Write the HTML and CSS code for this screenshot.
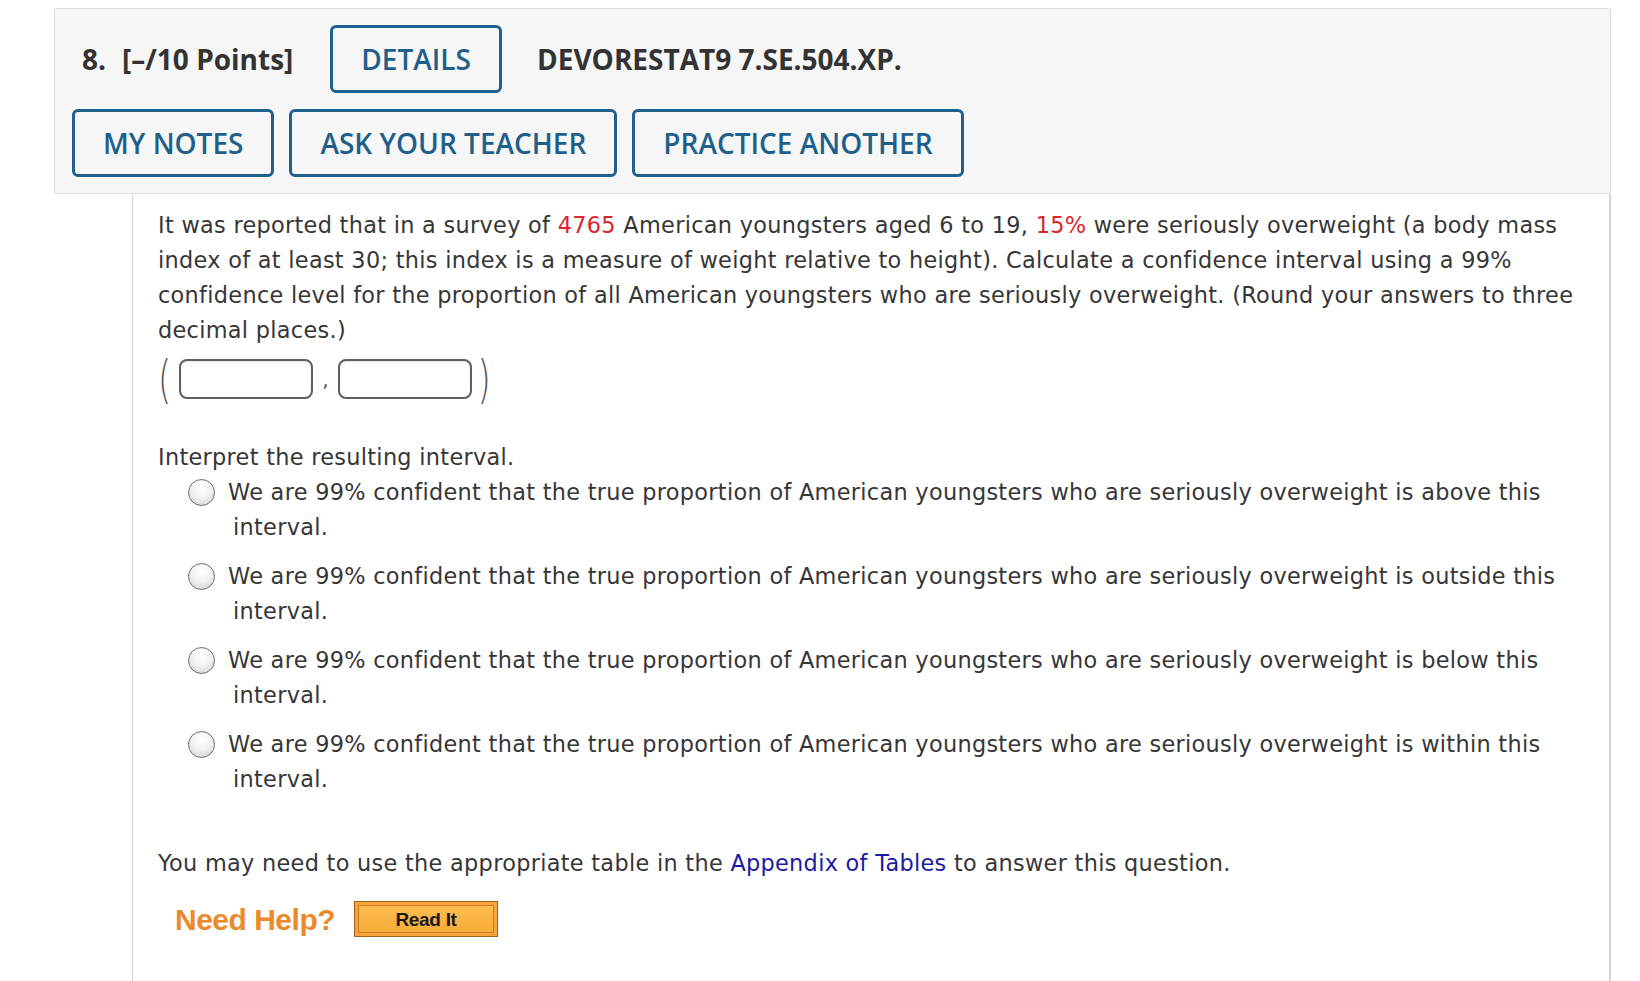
FILE: index.html
```html
<!DOCTYPE html>
<html>
<head>
<meta charset="utf-8">
<link rel="stylesheet" href="styles.css">
</head>
<body>
<div class="question">
  <div class="qhead">
    <div class="row row-top">
      <span class="qnum">8.</span>
      <span class="points">[–/10 Points]</span>
      <span class="btn btn-details">DETAILS</span>
      <span class="qid">DEVORESTAT9 7.SE.504.XP.</span>
    </div>
    <div class="row row-btns">
      <span class="btn">MY NOTES</span>
      <span class="btn">ASK YOUR TEACHER</span>
      <span class="btn">PRACTICE ANOTHER</span>
    </div>
  </div>
  <div class="qbody">
    <p class="stem">It was reported that in a survey of <span class="red">4765</span> American youngsters aged 6 to 19, <span class="red">15%</span> were seriously overweight (a body mass index of at least 30; this index is a measure of weight relative to height). Calculate a confidence interval using a 99% confidence level for the proportion of all American youngsters who are seriously overweight. (Round your answers to three decimal places.)</p>
    <div class="interval">
      <span class="paren">(</span>
      <span class="inbox"></span>
      <span class="comma">,</span>
      <span class="inbox"></span>
      <span class="paren">)</span>
    </div>
    <p class="prompt">Interpret the resulting interval.</p>
    <ul class="options">
      <li class="opt"><span class="radio"></span><span class="opt-text">We are 99% confident that the true proportion of American youngsters who are seriously overweight is above this interval.</span></li>
      <li class="opt"><span class="radio"></span><span class="opt-text">We are 99% confident that the true proportion of American youngsters who are seriously overweight is outside this interval.</span></li>
      <li class="opt"><span class="radio"></span><span class="opt-text">We are 99% confident that the true proportion of American youngsters who are seriously overweight is below this interval.</span></li>
      <li class="opt"><span class="radio"></span><span class="opt-text">We are 99% confident that the true proportion of American youngsters who are seriously overweight is within this interval.</span></li>
    </ul>
    <p class="note">You may need to use the appropriate table in the <a class="link" href="#">Appendix of Tables</a> to answer this question.</p>
    <div class="help">
      <span class="help-label">Need Help?</span>
      <span class="read-it"><span class="read-inner">Read It</span></span>
    </div>
  </div>
</div>
</body>
</html>
```
FILE: styles.css
```css
html, body {
  margin: 0;
  padding: 0;
  background: #ffffff;
}
body {
  padding: 8px 0 0 54px;
  height: 981px;
  box-sizing: border-box;
  overflow: hidden;
}
.question {
  width: 1557px;
  display: flex;
  flex-direction: column;
  height: 100%;
}
.qhead {
  background: #f6f6f6;
  border: 1px solid #dcdcdc;
  border-radius: 2px;
  padding: 16px 0 16px 17px;
  display: flex;
  flex-direction: column;
  gap: 16px;
  font-family: "Open Sans", "Liberation Sans", sans-serif;
}
.row {
  display: flex;
  align-items: center;
}
.row-top {
  padding-left: 10px;
}
.qnum, .points, .qid {
  font-weight: 700;
  font-size: 28px;
  color: #333333;
}
.qnum { margin-right: 16px; }
.points { margin-right: 37px; }
.qid { margin-left: 35px; }
.row-btns {
  gap: 15px;
}
.btn {
  display: inline-flex;
  align-items: center;
  justify-content: center;
  height: 68px;
  box-sizing: border-box;
  border: 3px solid #21608d;
  border-radius: 6px;
  padding: 0 28px;
  font-size: 28px;
  font-weight: 600;
  color: #1f5f8b;
}
.qbody {
  flex: 1;
  margin-left: 78px;
  border-left: 1px solid #d4d4d4;
  border-right: 2px solid #d4d4d4;
  padding: 14px 2px 0 25px;
  font-family: "DejaVu Sans", Verdana, sans-serif;
  font-size: 22.4px;
  line-height: 35px;
  color: #363636;
}
.stem {
  margin: 0;
  letter-spacing: 0.3px;
}
.red { color: #d8262b; }
.interval {
  display: flex;
  align-items: center;
  height: 40px;
  margin-top: 11px;
}
.paren {
  width: 21px;
  text-align: left;
  font-size: 52px;
  font-weight: 300;
  color: #555;
  line-height: 40px;
  transform: scaleX(0.65);
  transform-origin: left center;
}
.paren:last-child {
  width: 16px;
  text-align: right;
  transform-origin: right center;
}
.inbox {
  width: 134px;
  height: 40px;
  box-sizing: border-box;
  border: 2px solid #5f5f5f;
  border-radius: 8px;
  background: #fff;
  box-shadow: inset 0 1px 2px rgba(0,0,0,0.12);
}
.comma {
  width: 25px;
  text-align: center;
  align-self: flex-end;
  line-height: 38px;
  font-size: 20px;
  color: #555;
}
.prompt {
  margin: 41px 0 0 0;
  letter-spacing: 0.3px;
}
.options {
  list-style: none;
  margin: 0;
  padding: 0 0 0 30px;
}
.opt {
  display: flex;
  align-items: flex-start;
  margin-bottom: 14px;
  letter-spacing: 0.3px;
}
.opt:last-child {
  margin-bottom: 0;
}
.radio {
  flex: none;
  width: 27px;
  height: 27px;
  box-sizing: border-box;
  border-radius: 50%;
  border: 1.5px solid #6c6c6c;
  background: radial-gradient(circle at 50% 30%, #ffffff 0%, #f2f2f2 45%, #cfcfcf 100%);
  margin-top: 4px;
  margin-right: 18px;
}
.opt-text {
  display: block;
  text-indent: -5px;
}
.note {
  margin: 49px 0 0 0;
  letter-spacing: 0.3px;
}
.link {
  color: #1b1ba3;
  text-decoration: none;
}
.help {
  display: flex;
  align-items: center;
  margin-top: 20px;
  padding-left: 17px;
  gap: 19px;
}
.help-label {
  font-family: "Liberation Sans", Arial, sans-serif;
  font-weight: 700;
  font-size: 30px;
  color: #ec8a2a;
  letter-spacing: -0.5px;
}
.read-it {
  display: flex;
  width: 144px;
  height: 36px;
  box-sizing: border-box;
  border: 1px solid #a2621e;
  background: #f7a43a;
  padding: 3px;
}
.read-inner {
  flex: 1;
  display: flex;
  align-items: center;
  justify-content: center;
  border: 1px solid #c97e22;
  background: linear-gradient(#fdbb4f, #f9ac3a);
  font-family: "Liberation Sans", Arial, sans-serif;
  font-weight: 700;
  font-size: 19px;
  color: #1a1a1a;
  letter-spacing: -0.3px;
}
```
